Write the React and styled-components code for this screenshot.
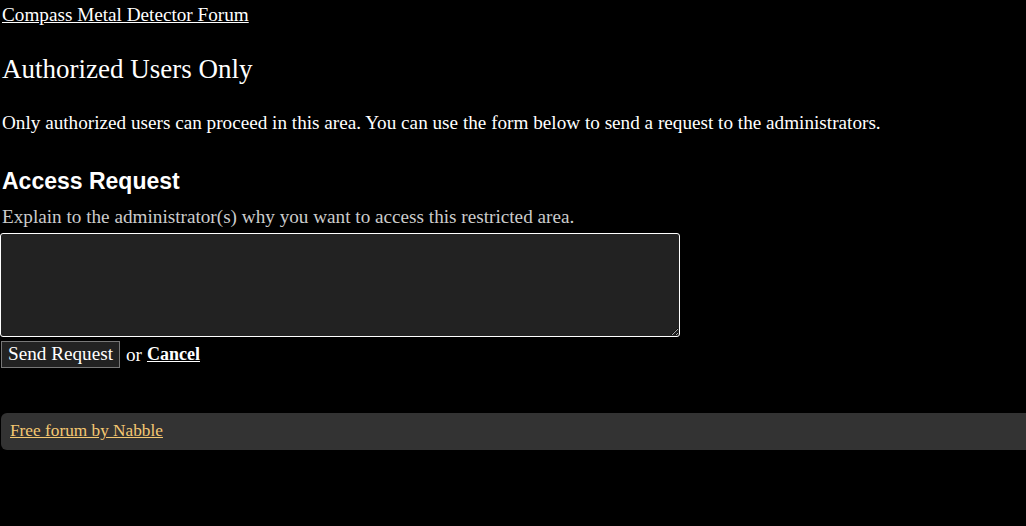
import React from "react";
import styled, { createGlobalStyle } from "styled-components";

const GlobalStyle = createGlobalStyle`
  html, body {
    margin: 0;
    background: #000;
    color: #fff;
    font-family: "Liberation Serif", "Times New Roman", serif;
  }
  body {
    padding: 4px 0 0 2px;
  }
`;

const Page = styled.div`
  display: flex;
  flex-direction: column;
`;

const ForumLink = styled.a`
  color: #fff;
  font-size: 19.2px;
  text-decoration: underline;
`;

const Title = styled.h1`
  font-size: 27px;
  font-weight: normal;
  margin: 28px 0 0 0;
`;

const Intro = styled.p`
  font-size: 19.2px;
  margin: 27px 0 0 0;
`;

const SectionTitle = styled.h2`
  font-family: "Liberation Sans", Arial, sans-serif;
  font-size: 23px;
  font-weight: bold;
  margin: 34px 0 0 0;
`;

const Hint = styled.div`
  color: #ccc;
  font-size: 19.2px;
  margin-top: 11px;
`;

const Message = styled.textarea`
  box-sizing: border-box;
  width: 680px;
  height: 104px;
  margin: 5px 0 0 -2px;
  background: #222;
  color: #fff;
  border: 1px solid #fff;
  border-radius: 3px;
`;

const Actions = styled.div`
  display: flex;
  align-items: center;
  gap: 5px;
  font-size: 19.2px;
  margin-top: 4px;
`;

const Button = styled.button`
  font-family: "Liberation Serif", "Times New Roman", serif;
  font-size: 19.2px;
  color: #fff;
  background: #222;
  border: 1px solid #777;
  padding: 1px 6px 2px;
  margin: 0 1px 0 -1px;
`;

const CancelLink = styled.a`
  color: #fff;
  font-size: 18px;
  font-weight: bold;
  text-decoration: underline;
`;

const Footer = styled.div`
  margin: 45px 0 0 -1px;
  background: #333;
  border-radius: 6px 0 0 6px;
  padding: 8px 9px;
  height: 21px;
`;

const FooterLink = styled.a`
  color: #f5c872;
  font-size: 17.28px;
  text-decoration: underline;
`;

export default function App() {
  return (
    <>
      <GlobalStyle />
      <Page>
        <div>
          <ForumLink href="#">Compass Metal Detector Forum</ForumLink>
        </div>
        <Title>Authorized Users Only</Title>
        <Intro>
          Only authorized users can proceed in this area. You can use the form
          below to send a request to the administrators.
        </Intro>
        <SectionTitle>Access Request</SectionTitle>
        <Hint>
          Explain to the administrator(s) why you want to access this restricted
          area.
        </Hint>
        <Message />
        <Actions>
          <Button>Send Request</Button>
          <span>or</span>
          <CancelLink href="#">Cancel</CancelLink>
        </Actions>
        <Footer>
          <FooterLink href="#">Free forum by Nabble</FooterLink>
        </Footer>
      </Page>
    </>
  );
}
